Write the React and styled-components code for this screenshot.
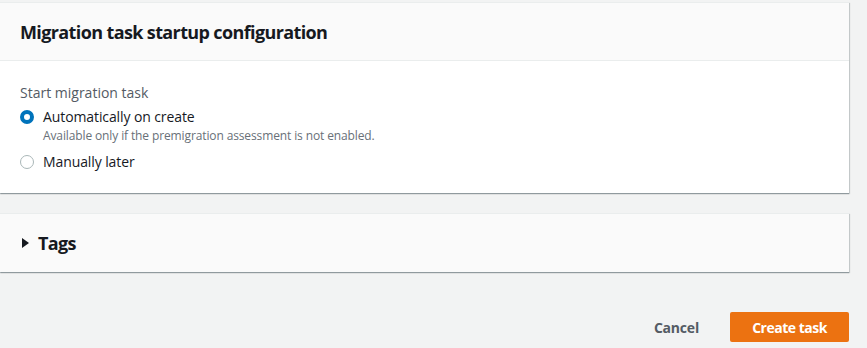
import React from "react";
import styled, { createGlobalStyle } from "styled-components";

const Global = createGlobalStyle`
  html, body { margin: 0; padding: 0; background: #f2f3f3; }
  body { font-family: "Open Sans", "Noto Sans", Arial, sans-serif; color: #16191f; }
`;

const Page = styled.div`
  width: 867px;
  height: 348px;
  box-sizing: border-box;
  padding: 2px 18px 0 0;
  display: flex;
  flex-direction: column;
  gap: 20px;
  overflow: hidden;
`;

const Panel = styled.section`
  background: #fff;
  border-top: 1px solid #eaeded;
  box-shadow: 0 1px 1px 0 rgba(0, 28, 36, 0.3), 1px 1px 1px 0 rgba(0, 28, 36, 0.15);
`;

const PanelHeader = styled.div`
  background: #fafafa;
  height: 58px;
  box-sizing: border-box;
  border-bottom: ${(p) => (p.$divided ? "1px solid #eaeded" : "none")};
  display: flex;
  align-items: center;
  padding: 0 20px;
  gap: 9px;
`;

const Title = styled.h2`
  margin: 0;
  font-size: 18px;
  font-weight: 700;
  letter-spacing: -0.62px;
  color: #16191f;
`;

const Body = styled.div`
  padding: 21px 20px 16px;
  display: flex;
  flex-direction: column;
`;

const Label = styled.div`
  font-size: 14px;
  line-height: 22px;
  color: #545b64;
  margin-bottom: 2px;
`;

const Option = styled.label`
  display: grid;
  grid-template-columns: 14px 1fr;
  column-gap: 9px;
  align-items: start;
  margin-bottom: ${(p) => (p.$spaced ? "7px" : "4px")};
`;

const RadioDot = styled.span`
  width: 14px;
  height: 14px;
  margin-top: 4px;
  box-sizing: border-box;
  border-radius: 50%;
  border: ${(p) => (p.$checked ? "4px solid #0073bb" : "1px solid #aab7b8")};
  background: #fff;
`;

const OptionText = styled.div`
  display: flex;
  flex-direction: column;
`;

const OptionLabel = styled.span`
  font-size: 14px;
  line-height: 22px;
  letter-spacing: -0.1px;
  color: #16191f;
`;

const OptionDesc = styled.span`
  font-size: 12px;
  line-height: 16px;
  letter-spacing: -0.12px;
  color: #687078;
`;

const Caret = styled.span`
  width: 0;
  height: 0;
  border-top: 5px solid transparent;
  border-bottom: 5px solid transparent;
  border-left: 7px solid #16191f;
  margin-left: 2px;
`;

const Footer = styled.div`
  display: flex;
  justify-content: flex-end;
  align-items: center;
  gap: 31px;
  margin-top: 20px;
`;

const LinkButton = styled.button`
  border: none;
  background: none;
  font-family: inherit;
  font-size: 14px;
  font-weight: 700;
  letter-spacing: -0.2px;
  color: #545b64;
  padding: 0;
`;

const PrimaryButton = styled.button`
  border: none;
  background: #ec7211;
  color: #fff;
  font-family: inherit;
  font-size: 14px;
  font-weight: 700;
  letter-spacing: -0.5px;
  height: 30px;
  width: 119px;
  border-radius: 2px;
  padding: 0;
`;

export default function App() {
  return (
    <>
      <Global />
      <Page>
        <Panel>
          <PanelHeader $divided>
            <Title>Migration task startup configuration</Title>
          </PanelHeader>
          <Body>
            <Label>Start migration task</Label>
            <Option $spaced>
              <RadioDot $checked />
              <OptionText>
                <OptionLabel>Automatically on create</OptionLabel>
                <OptionDesc>Available only if the premigration assessment is not enabled.</OptionDesc>
              </OptionText>
            </Option>
            <Option>
              <RadioDot />
              <OptionText>
                <OptionLabel>Manually later</OptionLabel>
              </OptionText>
            </Option>
          </Body>
        </Panel>
        <Panel>
          <PanelHeader>
            <Caret />
            <Title>Tags</Title>
          </PanelHeader>
        </Panel>
        <Footer>
          <LinkButton>Cancel</LinkButton>
          <PrimaryButton>Create task</PrimaryButton>
        </Footer>
      </Page>
    </>
  );
}
